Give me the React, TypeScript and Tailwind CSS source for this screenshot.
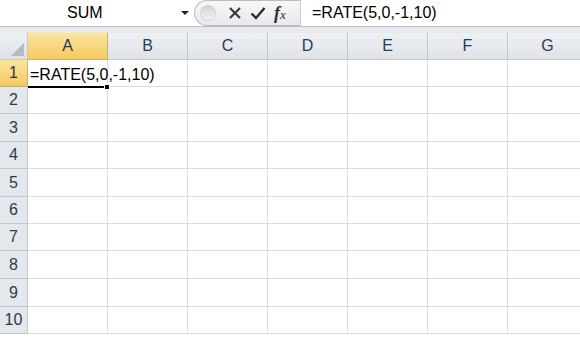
const cols = ['A', 'B', 'C', 'D', 'E', 'F', 'G'];
const rowHeights = [27, 27, 28, 27, 28, 27, 27, 28, 28, 27];
const font = { fontFamily: '"Liberation Sans", Arial, sans-serif' };

function FormulaBar() {
  return (
    <div className="flex h-[26px] bg-white items-center">
      {/* Name box */}
      <div className="w-[176px] shrink-0 pl-[67px] text-left text-[16px] text-black">SUM</div>
      <div className="w-[18px] shrink-0 flex justify-center">
        <div className="w-0 h-0 border-l-[4px] border-r-[4px] border-t-[4px] border-l-transparent border-r-transparent border-t-[#222]" />
      </div>
      {/* Buttons pill */}
      <div className="h-[26px] w-[106px] shrink-0 flex items-center rounded-l-full border border-[#b9bdc3] border-r-0 bg-gradient-to-b from-[#f7f7f7] to-[#e8e9eb]">
        <div className="ml-[5px] w-[16px] h-[16px] rounded-full bg-gradient-to-b from-[#d3d5d8] to-[#f1f2f3] border border-[#d0d2d5]" />
        <svg className="ml-[12px]" width="14" height="14" viewBox="0 0 14 14">
          <path d="M2 2 L12 12 M12 2 L2 12" stroke="#3a3a3a" strokeWidth="2.2" />
        </svg>
        <svg className="ml-[8px]" width="16" height="14" viewBox="0 0 16 14">
          <path d="M1.5 7.5 L6 12 L14.5 2" stroke="#2e2e2e" strokeWidth="2.4" fill="none" />
        </svg>
        <span className="ml-[8px] text-[18px] italic text-[#2e2e2e] leading-none" style={{ fontFamily: '"Liberation Serif", serif' }}>
          <span className="font-bold">f</span><span className="text-[13px]">x</span>
        </span>
      </div>
      <div className="h-[26px] border-l border-[#c8ccd1]" />
      <div className="pl-[11px] text-[16px] text-black">=RATE(5,0,-1,10)</div>
    </div>
  );
}

export default function App() {
  return (
    <div className="w-[580px] h-[338px] overflow-hidden bg-white" style={font}>
      <FormulaBar />
      <div className="h-[7px] border-t border-[#b7bcc3] bg-[#e6e9ee]" />
      {/* Column headers */}
      <div className="flex h-[27px]">
        <div className="w-[28px] shrink-0 relative bg-gradient-to-b from-[#eef0f3] to-[#dde1e6] border-r border-b border-[#c2c8d0]">
          <svg className="absolute right-[3px] bottom-[3px]" width="13" height="13" viewBox="0 0 13 13">
            <path d="M13 0 L13 13 L0 13 Z" fill="#b4bac2" />
          </svg>
        </div>
        {cols.map((c, i) => (
          <div
            key={c}
            className={
              i === 0
                ? 'w-[80px] shrink-0 flex items-center justify-center text-[16px] text-[#27374d] bg-gradient-to-b from-[#fbe59f] to-[#f5c95f] border-r border-b border-[#dbb04e]'
                : 'w-[80px] shrink-0 flex items-center justify-center text-[16px] text-[#2b3b52] bg-gradient-to-b from-[#eef0f3] to-[#dfe3e8] border-r border-b border-[#c2c8d0]'
            }
          >
            {c}
          </div>
        ))}
      </div>
      {/* Rows */}
      {rowHeights.map((h, r) => (
        <div key={r} className="flex" style={{ height: h }}>
          <div
            className={
              r === 0
                ? 'w-[28px] shrink-0 flex items-center justify-center text-[16px] text-[#27374d] bg-gradient-to-b from-[#fbe59f] to-[#f5c95f] border-r border-b border-[#dbb04e]'
                : 'w-[28px] shrink-0 flex items-center justify-center text-[16px] text-[#2b3b52] bg-[#e4e7ec] border-r border-b border-[#c2c8d0]'
            }
          >
            {r + 1}
          </div>
          {cols.map((c, i) => (
            <div key={c} className="w-[80px] shrink-0 relative border-r border-b border-[#dcdee1]">
              {r === 0 && i === 0 && (
                <>
                  <div className="absolute left-[2px] top-[3px] text-[16px] text-black whitespace-nowrap z-10">=RATE(5,0,-1,10)</div>
                  <div className="absolute left-0 right-0 bottom-[-2px] h-[2px] bg-black z-10" />
                  <div className="absolute right-[-3px] bottom-[-4px] w-[6px] h-[6px] bg-black border border-white z-10" />
                </>
              )}
            </div>
          ))}
        </div>
      ))}
    </div>
  );
}
